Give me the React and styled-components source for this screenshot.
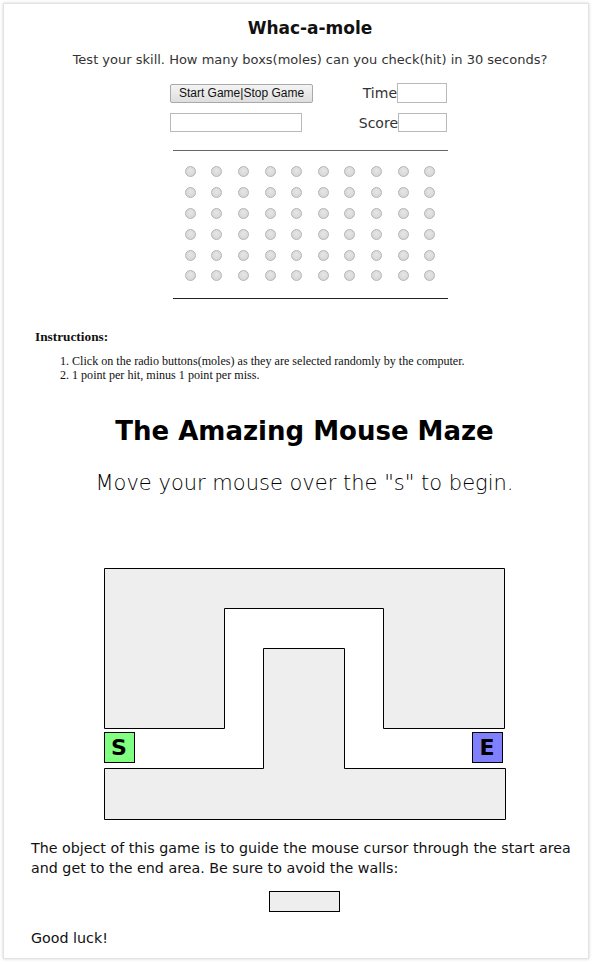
import React from 'react'
import styled, { createGlobalStyle } from 'styled-components'

const GlobalStyle = createGlobalStyle`
  html, body {
    margin: 0;
    padding: 0;
    background: #fff;
  }
  body {
    font-family: "DejaVu Sans", "Liberation Sans", sans-serif;
    color: #111;
  }
`;

const Card = styled.div`
  margin: 3px;
  width: 586px;
  height: 956px;
  box-sizing: border-box;
  border: 1px solid #e3e3e3;
  box-shadow: 0 0 3px rgba(0, 0, 0, 0.18);
  padding: 12px 10px 0 27px;
  overflow: hidden;
`;

const Whac = styled.section`
  margin-right: -11px;
  display: flex;
  flex-direction: column;
  align-items: center;
`;

const Title = styled.h2`
  margin: 0;
  font-size: 17px;
  line-height: 24px;
  font-weight: bold;
`;

const Lead = styled.p`
  margin: 10px 0 0;
  font-size: 13px;
  line-height: 20px;
  color: #333;
`;

const Controls = styled.div`
  margin: 13px 3px 0 0;
  width: 277px;
  display: grid;
  grid-template-columns: 1fr auto;
  row-gap: 10px;
  align-items: center;
`;

const GameButton = styled.button`
  justify-self: start;
  width: 143px;
  height: 19px;
  padding: 0;
  font-family: Arial, "Liberation Sans", sans-serif;
  font-size: 12px;
  color: #111;
  background: linear-gradient(#f4f4f4, #dedede);
  border: 1px solid #a9a9a9;
  border-radius: 2px;
`;

const Field = styled.span`
  justify-self: end;
  display: flex;
  align-items: center;
  font-size: 14px;
  color: #333;
`;

const Input = styled.input`
  width: ${p => p.$w}px;
  height: ${p => p.$h}px;
  box-sizing: border-box;
  border: 1px solid #b9b9b9;
  padding: 0;
  margin: 0;
  background: #fff;
`;

const Board = styled.div`
  margin-top: 18px;
  width: 275px;
  border-top: 1px solid #666;
  border-bottom: 1px solid #222;
  padding: 10px 0 12px;
  display: flex;
  justify-content: center;
`;

const Holes = styled.div`
  display: grid;
  grid-template-columns: repeat(10, 26.6px);
  grid-auto-rows: 20.9px;
`;

const Hole = styled.span`
  place-self: center;
  width: 11px;
  height: 11px;
  border-radius: 50%;
  box-sizing: border-box;
  border: 1px solid #b4b4b4;
  background: radial-gradient(circle at 50% 40%, #e6e6e6, #d2d2d2);
`;

const Instructions = styled.div`
  margin: 30px 0 0 4px;
  font-family: "Liberation Serif", "DejaVu Serif", serif;
  color: #111;
`;

const InstrTitle = styled.h4`
  margin: 0;
  font-size: 13.3px;
  line-height: 16px;
  font-weight: bold;
`;

const Steps = styled.ol`
  margin: 9px 0 0;
  padding-left: 37px;
  font-size: 12.1px;
  line-height: 14px;
`;

const Maze = styled.section`
  margin-top: 29px;
  display: flex;
  flex-direction: column;
  align-items: center;
`;

const MazeTitle = styled.h1`
  margin: 0;
  font-size: 26px;
  line-height: 40px;
  font-weight: bold;
  color: #000;
`;

const MazeLead = styled.p`
  margin: 18px 0 0;
  font-size: 21px;
  line-height: 28px;
  font-weight: 300;
  color: #000;
`;

const Field2 = styled.div`
  position: relative;
  margin-top: 71px;
  width: 402px;
  height: 252px;
`;

const Walls = styled.svg`
  display: block;
`;

const Pad = styled.div`
  position: absolute;
  top: 164px;
  left: ${p => p.$left}px;
  width: 31px;
  height: 31px;
  box-sizing: border-box;
  border: 1px solid #000;
  background: ${p => p.$bg};
  display: flex;
  align-items: center;
  justify-content: center;
  font-size: 22px;
  font-weight: bold;
  color: #000;
`;

const Text = styled.p`
  margin: ${p => p.$mt || 0}px 0 0;
  font-size: 14.25px;
  line-height: 20px;
  color: #111;
`;

const Status = styled.div`
  margin: 13px auto 0;
  width: 71px;
  height: 21px;
  box-sizing: border-box;
  border: 1px solid #000;
  background: #eee;
`;

const rows = Array.from({ length: 6 });
const cols = Array.from({ length: 10 });

export default function App() {
  return (
    <>
      <GlobalStyle />
      <Card>
        <Whac>
          <Title>Whac-a-mole</Title>
          <Lead>Test your skill. How many boxs(moles) can you check(hit) in 30 seconds?</Lead>
          <Controls>
            <GameButton>Start Game|Stop Game</GameButton>
            <Field>Time<Input $w={50} $h={20} /></Field>
            <Input $w={132} $h={19} />
            <Field>Score<Input $w={49} $h={19} /></Field>
          </Controls>
          <Board>
            <Holes>
              {rows.map((_, r) => cols.map((_, c) => <Hole key={r + '-' + c} />))}
            </Holes>
          </Board>
        </Whac>

        <Instructions>
          <InstrTitle>Instructions:</InstrTitle>
          <Steps>
            <li>Click on the radio buttons(moles) as they are selected randomly by the computer.</li>
            <li>1 point per hit, minus 1 point per miss.</li>
          </Steps>
        </Instructions>

        <Maze>
          <MazeTitle>The Amazing Mouse Maze</MazeTitle>
          <MazeLead>Move your mouse over the "s" to begin.</MazeLead>
          <Field2>
            <Walls width="403" height="253" viewBox="0 0 403 253">
              <path
                d="M0.5 0.5H400.5V160.5H279.5V40.5H120.5V160.5H0.5Z"
                fill="#eee" stroke="#000" strokeWidth="1"
              />
              <path
                d="M0.5 200.5H159.5V80.5H240.5V200.5H401.5V251.5H0.5Z"
                fill="#eee" stroke="#000" strokeWidth="1"
              />
            </Walls>
            <Pad $left={0} $bg="#80ff80">S</Pad>
            <Pad $left={368} $bg="#8080ff">E</Pad>
          </Field2>
        </Maze>

        <Text $mt={18}>
          The object of this game is to guide the mouse cursor through the start area
          and get to the end area. Be sure to avoid the walls:
        </Text>
        <Status />
        <Text $mt={16}>Good luck!</Text>
      </Card>
    </>
  )
}
